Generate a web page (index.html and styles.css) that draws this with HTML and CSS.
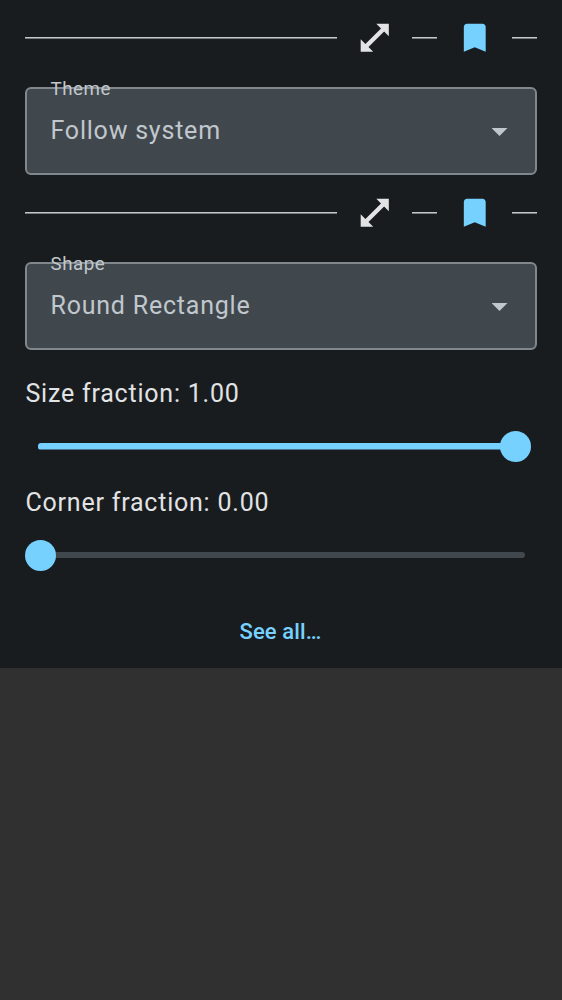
FILE: index.html
```html
<!DOCTYPE html>
<html lang="en"><head><meta charset="utf-8"><title>Settings</title><link rel="stylesheet" href="styles.css"></head>
<body>
<main class="panel">
<section class="setting">
<div class="toolbar"><span class="line line-main"></span><svg class="icon expand" viewBox="0 0 24 24"><path d="M21 11V3h-8l3.01 3.01-10 10L3 13v8h8l-3.01-3.01 10-10z"/></svg><span class="line"></span><svg class="icon bookmark" viewBox="0 0 24 24"><path d="M17 3H7c-1.1 0-1.99.9-1.99 2L5 21l7-3 7 3V5c0-1.1-.9-2-2-2z"/></svg><span class="line"></span></div>
<div class="field"><span class="label">Theme</span><span class="value">Follow system</span><span class="arrow"></span></div>
</section>
<section class="setting">
<div class="toolbar"><span class="line line-main"></span><svg class="icon expand" viewBox="0 0 24 24"><path d="M21 11V3h-8l3.01 3.01-10 10L3 13v8h8l-3.01-3.01 10-10z"/></svg><span class="line"></span><svg class="icon bookmark" viewBox="0 0 24 24"><path d="M17 3H7c-1.1 0-1.99.9-1.99 2L5 21l7-3 7 3V5c0-1.1-.9-2-2-2z"/></svg><span class="line"></span></div>
<div class="field"><span class="label">Shape</span><span class="value">Round Rectangle</span><span class="arrow"></span></div>
</section>
<section class="range"><div class="caption">Size fraction: 1.00</div><div class="slider full"><span class="track"></span><span class="thumb"></span></div></section>
<section class="range"><div class="caption">Corner fraction: 0.00</div><div class="slider"><span class="track"></span><span class="thumb"></span></div></section>
<div class="more">See all…</div>
</main>
</body></html>
```
FILE: styles.css
```css
* { box-sizing: border-box; }
body { margin: 0; background: #303030; font-family: Roboto, sans-serif; color: #e1e3e5; }
.panel { height: 668px; background: #191c1e; padding: 0 25px; }
.setting { height: 175px; }
.toolbar { height: 75px; display: flex; align-items: center; }
.line { width: 25px; height: 2px; background: linear-gradient(#c0c7cd 50%, #767b7f 50%); }
.line-main { width: 312px; }
.icon { width: 38px; height: 38px; margin: 0 18.5px; padding: 0 .5px .5px 0; }
.expand { fill: #e1e3e5; }
.bookmark { fill: #76d1ff; }
.field { position: relative; height: 88px; margin-top: 12px; padding: 0 27.5px 0 23.5px; display: flex; align-items: center; justify-content: space-between; background: #41484d; border: 2px solid #81888d; border-radius: 6px; color: #c0c7cd; }
.label { position: absolute; left: 23.5px; top: -11px; font-size: 18.75px; line-height: 22px; letter-spacing: .54px; }
.value { font-size: 25px; line-height: 30px; letter-spacing: .78px; }
.arrow { width: 16px; height: 8px; margin-top: 2px; background: #c0c7cd; clip-path: polygon(0 0, 100% 0, 50% 100%); }
.range { height: 109px; padding-top: 29px; }
.caption { padding-left: .5px; font-size: 25px; line-height: 30px; letter-spacing: .78px; }
.slider { position: relative; height: 31px; margin-top: 22px; padding: 12px 12.5px; }
.track { display: block; height: 6.25px; border-radius: 3.125px; background: #41484d; }
.full .track { height: 7px; background: linear-gradient(#76d1ff 86%, #477592 86%); }
.thumb { position: absolute; left: 0; top: 0; width: 31px; height: 31px; border-radius: 50%; background: #76d1ff; }
.full .thumb { left: auto; right: 6.5px; }
.more { height: 100px; padding: 50px 1px 0 0; text-align: center; color: #76d1ff; font-size: 22px; line-height: 28px; font-weight: 500; letter-spacing: .13px; }
```
